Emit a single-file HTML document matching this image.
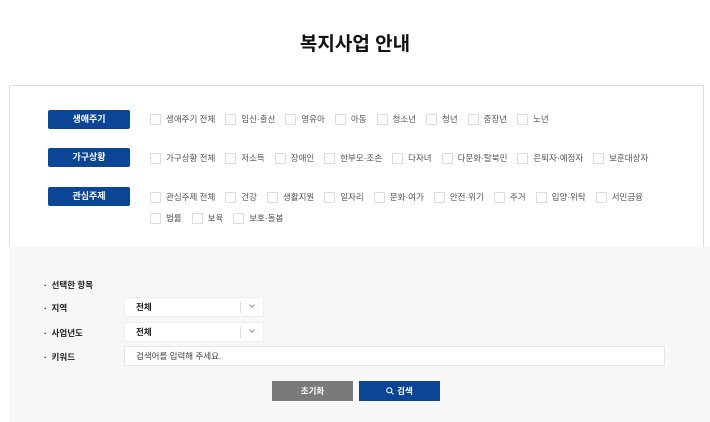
<!DOCTYPE html>
<html><head><meta charset="utf-8"><style>
*{margin:0;padding:0;box-sizing:border-box}
body{width:710px;height:422px;background:#fff;font-family:"Liberation Sans","Noto Sans CJK KR",sans-serif;position:relative;overflow:hidden;color:#333}
.abs{position:absolute}
h1{position:absolute;left:0;width:710px;top:29px;text-align:center;font-size:19px;font-weight:700;color:#111}
.box{left:9px;top:85px;width:695px;height:163px;border:1px solid #ddd;border-bottom:none}
.lab{position:absolute;left:48px;width:82px;height:19px;background:#0b4596;border-radius:2px;color:#fff;font-size:9px;font-weight:700;text-align:center;line-height:19px}
.row{position:absolute;left:150px;font-size:8.5px;color:#555;display:flex;align-items:center;white-space:nowrap}
.cb{display:inline-block;width:11px;height:11px;border:1px solid #ddd;background:#fff;margin-right:5px}
.row span.t{margin-right:10px}
.gray{left:9px;top:247px;width:701px;height:175px;background:#f7f7f7}
.fl{position:absolute;left:44px;font-size:8.5px;font-weight:700;color:#222}
.sel{position:absolute;left:124px;width:140px;height:20px;background:#fff;border:1px solid #eee;font-size:8.5px;font-weight:700;padding-left:11px;line-height:18px;color:#222}
.sel:after{content:"";position:absolute;right:22px;top:4px;width:1px;height:11px;background:#ddd}
.sel i{position:absolute;right:9px;top:5px;width:4px;height:4px;border-right:1px solid #999;border-bottom:1px solid #999;transform:rotate(45deg)}
.btn{position:absolute;top:381px;width:81px;height:20px;color:#fff;font-size:8.5px;font-weight:700;text-align:center;line-height:20px}
</style></head><body>
<h1>복지사업 안내</h1>
<div class="abs box"></div>
<div class="lab" style="top:110px">생애주기</div>
<div class="lab" style="top:148px">가구상황</div>
<div class="lab" style="top:187px">관심주제</div>
<div class="row" style="top:113px"><i class="cb"></i><span class="t">생애주기 전체</span><i class="cb"></i><span class="t">임신·출산</span><i class="cb"></i><span class="t">영유아</span><i class="cb"></i><span class="t">아동</span><i class="cb"></i><span class="t">청소년</span><i class="cb"></i><span class="t">청년</span><i class="cb"></i><span class="t">중장년</span><i class="cb"></i><span class="t">노년</span></div>
<div class="row" style="top:152px"><i class="cb"></i><span class="t">가구상황 전체</span><i class="cb"></i><span class="t">저소득</span><i class="cb"></i><span class="t">장애인</span><i class="cb"></i><span class="t">한부모·조손</span><i class="cb"></i><span class="t">다자녀</span><i class="cb"></i><span class="t">다문화·탈북민</span><i class="cb"></i><span class="t">은퇴자·예정자</span><i class="cb"></i><span class="t">보훈대상자</span></div>
<div class="row" style="top:191px"><i class="cb"></i><span class="t">관심주제 전체</span><i class="cb"></i><span class="t">건강</span><i class="cb"></i><span class="t">생활지원</span><i class="cb"></i><span class="t">일자리</span><i class="cb"></i><span class="t">문화·여가</span><i class="cb"></i><span class="t">안전·위기</span><i class="cb"></i><span class="t">주거</span><i class="cb"></i><span class="t">입양·위탁</span><i class="cb"></i><span class="t">서민금융</span></div>
<div class="row" style="top:212px"><i class="cb"></i><span class="t">법률</span><i class="cb"></i><span class="t">보육</span><i class="cb"></i><span class="t">보호·돌봄</span></div>
<div class="abs gray"></div>
<div class="fl" style="top:279px">·&nbsp; 선택한 항목</div>
<div class="fl" style="top:302px">·&nbsp; 지역</div>
<div class="fl" style="top:327px">·&nbsp; 사업년도</div>
<div class="fl" style="top:351px">·&nbsp; 키워드</div>
<div class="sel" style="top:297px">전체<i></i></div>
<div class="sel" style="top:322px">전체<i></i></div>
<div class="abs" style="left:124px;top:346px;width:541px;height:20px;background:#fff;border:1px solid #e6e6e6;font-size:8.5px;color:#444;padding-left:11px;line-height:18px">검색어를 입력해 주세요.</div>
<div class="btn" style="left:272px;background:#7a7a7a">초기화</div>
<div class="btn" style="left:359px;background:#0b4596"><svg width="8" height="8" viewBox="0 0 8 8" style="vertical-align:-1px;margin-right:3px"><circle cx="3.3" cy="3.3" r="2.6" fill="none" stroke="#fff" stroke-width="1"/><path d="M5.2 5.2L7.5 7.5" stroke="#fff" stroke-width="1"/></svg>검색</div>
</body></html>
